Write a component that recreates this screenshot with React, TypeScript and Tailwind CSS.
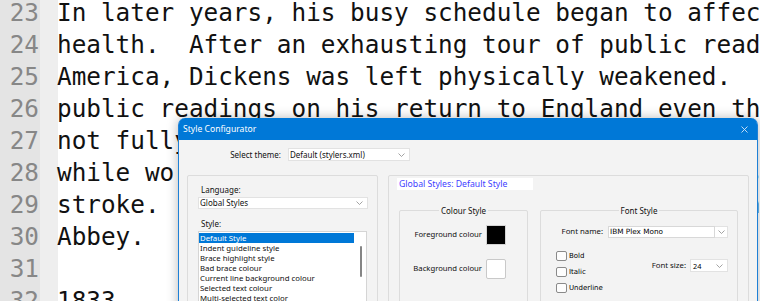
import React from "react"

const lines = [
    { n: 23, text: "In later years, his busy schedule began to affect his" },
    { n: 24, text: "health.  After an exhausting tour of public readings in" },
    { n: 25, text: "America, Dickens was left physically weakened.  He gave" },
    { n: 26, text: "public readings on his return to England even though he was" },
    { n: 27, text: "not fully recovered. In June 1870 he suffered a" },
    { n: 28, text: "while working on The Mystery of Edwin Drood, his second" },
    { n: 29, text: "stroke.  He was buried in Poets' Corner, Westminster" },
    { n: 30, text: "Abbey." },
    { n: 31, text: "" },
    { n: 32, text: "1833" },
]

const styleItems = [
    "Default Style",
    "Indent guideline style",
    "Brace highlight style",
    "Bad brace colour",
    "Current line background colour",
    "Selected text colour",
    "Multi-selected text color",
    "Caret colour",
]

const ui = { fontFamily: '"Noto Sans", "Liberation Sans", sans-serif' }
const dlg = { fontFamily: '"DejaVu Sans", "Liberation Sans", sans-serif' }
const mono = { fontFamily: '"DejaVu Sans Mono", "Liberation Mono", monospace' }

const Chevron = () => (
    <svg width="7" height="4" viewBox="0 0 7 4" className="shrink-0">
        <polyline points="0.5,0.5 3.5,3.5 6.5,0.5" fill="none" stroke="#8c8c8c" strokeWidth="0.8" />
    </svg>
)

const Combo = ({ text, className, textClass }: { text: string; className: string; textClass?: string }) => (
    <div className={`flex items-center justify-between bg-white border border-[#e2e2e2] pl-[1px] pr-[4px] ${className}`}>
        <span className={textClass ?? "text-[8px] leading-[10px] text-[#111]"}>{text}</span>
        <Chevron />
    </div>
)

const CheckBox = ({ label }: { label: string }) => (
    <div className="flex items-center gap-[2px] h-[10px]">
        <div className="w-[11px] h-[10px] rounded-[2px] border border-[#8a8a8a] bg-[#fdfdfd]" />
        <span className="text-[7px] leading-[10px] text-black" style={dlg}>{label}</span>
    </div>
)

const StyleConfigurator = () => (
    <div
        className="absolute left-[178px] top-[118px] w-[580px] h-[200px] flex flex-col border-x border-[#1e80d6] rounded-t-[7px] shadow-[0_0_12px_rgba(0,0,0,0.28)]"
        style={ui}
    >
        <div className="h-[22px] shrink-0 bg-[#0078d7] rounded-t-[6px] flex items-center justify-between pl-[4px] pr-[9px]">
            <span className="text-[8.6px] text-white">Style Configurator</span>
            <svg width="7" height="7" viewBox="0 0 7 7">
                <path d="M0.5 0.5 L6.5 6.5 M6.5 0.5 L0.5 6.5" stroke="#d6e6f6" strokeWidth="0.9" />
            </svg>
        </div>

        <div className="flex-1 bg-[#f3f3f3] flex flex-col">
            <div className="mt-[8px] flex items-center h-[13px]">
                <span className="w-[102px] text-right text-[8px] leading-[13px] text-[#111]">Select theme:</span>
                <Combo text="Default (stylers.xml)" className="ml-[7px] w-[122px] h-[13px]" />
            </div>

            <div className="mt-[14px] flex gap-[10px] pl-[8px]">
                <div className="w-[191px] h-[140px] border border-[#dcdcdc] rounded-[2px] flex flex-col">
                    <span className="pl-[13px] pt-[8px] text-[8px] leading-[11px] text-[#111]">Language:</span>
                    <Combo text="Global Styles" className="ml-[10px] mt-[2px] w-[170px] h-[12px]" />
                    <span className="pl-[13px] mt-[9px] text-[8px] leading-[11px] text-[#111]">Style:</span>
                    <div className="ml-[10px] mt-[2px] w-[169px] h-[80px] border border-[#d5d5d5] bg-white flex">
                        <div className="w-[155px] pt-[1px] flex flex-col">
                            {styleItems.map((s, i) => (
                                <div
                                    key={s}
                                    className={`h-[10px] pl-[1px] text-[7.8px] leading-[10px] whitespace-nowrap ${i === 0 ? "bg-[#0078d7] text-white" : "text-[#111]"}`}
                                >
                                    {s}
                                </div>
                            ))}
                        </div>
                        <div className="flex-1">
                            <div className="mt-[14px] ml-[6px] w-[2px] h-[31px] rounded-[1px] bg-[#858585]" />
                        </div>
                    </div>
                </div>

                <div className="w-[361px] h-[140px] border border-[#dcdcdc] rounded-[2px] flex flex-col">
                    <div className="ml-[8px] mt-[2px] w-[136px] h-[12px] bg-white pl-[2px] text-[8.7px] leading-[12px] text-[#4040ff]">
                        Global Styles: Default Style
                    </div>
                    <div className="mt-[15px] flex gap-[12px] pl-[10px]">
                        <fieldset className="w-[129px] h-[110px] border border-[#dcdcdc] rounded-[2px]">
                            <legend className="mx-auto px-[2px] text-[8px] leading-[11px] text-[#111]">Colour Style</legend>
                            <div className="mt-[9px] flex items-center justify-end gap-[4px] pr-[21px]">
                                <span className="text-[7.7px] text-[#111]">Foreground colour</span>
                                <div className="w-[20px] h-[20px] bg-black border border-[#d4d4d4]" />
                            </div>
                            <div className="mt-[14px] flex items-center justify-end gap-[4px] pr-[21px]">
                                <span className="text-[7.7px] text-[#111]">Background colour</span>
                                <div className="w-[20px] h-[20px] bg-white border border-[#c9c9c9] rounded-[2px]" />
                            </div>
                        </fieldset>

                        <fieldset className="w-[198px] h-[110px] border border-[#dcdcdc] rounded-[2px]">
                            <legend className="mx-auto px-[2px] text-[8px] leading-[11px] text-[#111]">Font Style</legend>
                            <div className="mt-[10px] flex items-center justify-end gap-[5px] pr-[9px]">
                                <span className="text-[7.8px] text-[#111]">Font name:</span>
                                <div className="flex h-[12px]">
                                    <div className="w-[107px] bg-white border border-[#d8d8d8] pl-[1px] text-[7.3px] leading-[10px] text-black" style={dlg}>
                                        IBM Plex Mono
                                    </div>
                                    <div className="w-[13px] bg-white border border-l-0 border-[#e2e2e2] flex items-center justify-center">
                                        <Chevron />
                                    </div>
                                </div>
                            </div>
                            <div className="mt-[13px] flex">
                                <div className="pl-[15px] flex flex-col gap-[6px]">
                                    <CheckBox label="Bold" />
                                    <CheckBox label="Italic" />
                                    <CheckBox label="Underline" />
                                </div>
                                <div className="ml-auto mt-[8px] self-start flex items-center gap-[4px] pr-[9px]">
                                    <span className="text-[7.8px] text-[#111]">Font size:</span>
                                    <Combo
                                        text="24"
                                        className="w-[38px] h-[13px]"
                                        textClass="text-[7.3px] leading-[10px] text-black pl-[1px]"
                                    />
                                </div>
                            </div>
                        </fieldset>
                    </div>
                </div>
            </div>
        </div>
    </div>
)

export default function App() {
    return (
        <div className="relative w-[760px] h-[301px] overflow-hidden bg-white">
            <div className="flex h-full">
                <div className="flex shrink-0">
                    <div className="w-[40px] bg-[#e4e4e4] text-[#878787]">
                        <div className="-mt-[3px] text-[24.35px] leading-[32px] text-right pr-[1px]" style={mono}>
                            {lines.map((l) => (
                                <div key={l.n}>{l.n}</div>
                            ))}
                        </div>
                    </div>
                    <div className="w-[18px] bg-[#eeeeee]" />
                </div>
                <div className="-ml-px -mt-[3px] text-[24.35px] leading-[32px] text-[#111] whitespace-pre" style={mono}>
                    {lines.map((l) => (
                        <div key={l.n} className="h-[32px]">{l.text}</div>
                    ))}
                </div>
            </div>
            <StyleConfigurator />
        </div>
    )
}
